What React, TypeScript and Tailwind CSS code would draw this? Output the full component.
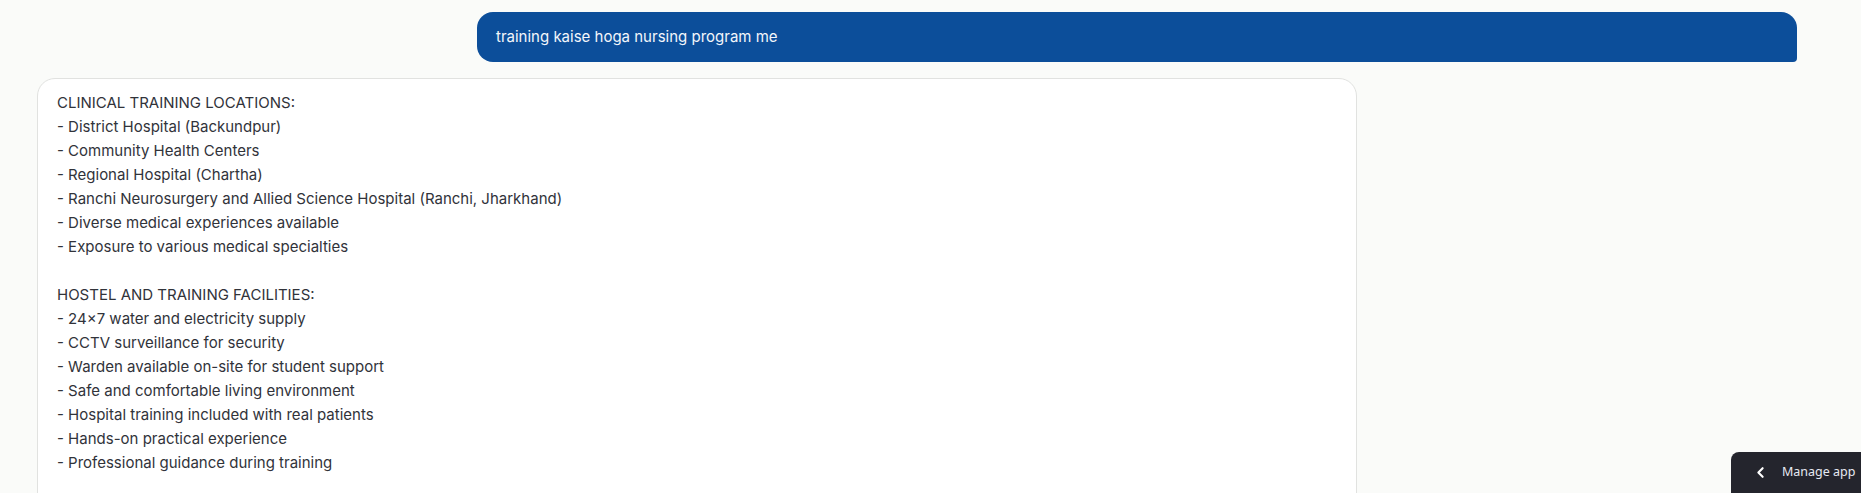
import React from 'react';
import { ChevronLeft } from 'lucide-react';

const reply = `CLINICAL TRAINING LOCATIONS:
- District Hospital (Backundpur)
- Community Health Centers
- Regional Hospital (Chartha)
- Ranchi Neurosurgery and Allied Science Hospital (Ranchi, Jharkhand)
- Diverse medical experiences available
- Exposure to various medical specialties

HOSTEL AND TRAINING FACILITIES:
- 24×7 water and electricity supply
- CCTV surveillance for security
- Warden available on-site for student support
- Safe and comfortable living environment
- Hospital training included with real patients
- Hands-on practical experience
- Professional guidance during training
`;

const App: React.FC = () => {
  return (
    <div className="h-screen overflow-hidden bg-[#fafbf9] font-['Inter','Noto_Sans',sans-serif]">
      <div className="pl-[37px] pr-[64px] pt-3 flex flex-col gap-4">
        {/* user message */}
        <div className="flex justify-end">
          <div className="w-full max-w-[75%] bg-[#0c4e9a] text-[#f3f6fb] text-[15px] leading-6 px-[19px] py-[13px] rounded-2xl rounded-br-[4px]">
            training kaise hoga nursing program me
          </div>
        </div>

        {/* assistant reply */}
        <div className="flex justify-start">
          <div className="w-full max-w-[75%] bg-white border border-[#e1e2e0] rounded-[18px] px-[19px] pt-3 pb-16">
            <div className="whitespace-pre-line text-[15px] leading-6 text-[#31333a]">{reply}</div>
          </div>
        </div>
      </div>

      {/* floating manage app */}
      <button className="fixed right-0 bottom-0 w-[130px] h-[41px] bg-[#24252d] rounded-tl-lg flex items-center pl-[21px] gap-[13px] whitespace-nowrap text-[#e6e9f2] text-[12.5px] font-['Noto_Sans','Open_Sans',sans-serif]">
        <ChevronLeft size={17} strokeWidth={3} className="text-white shrink-0" />
        <span>Manage app</span>
      </button>
    </div>
  );
};

export default App;
